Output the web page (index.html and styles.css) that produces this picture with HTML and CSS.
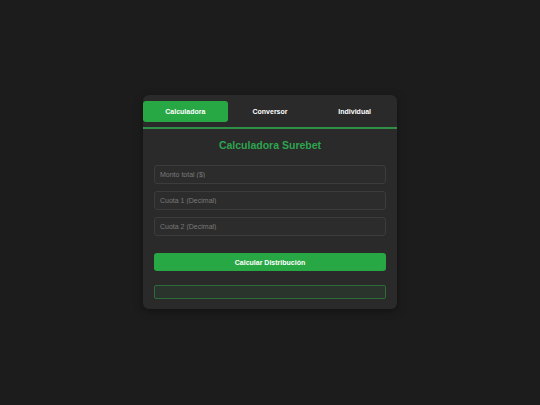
FILE: index.html
```html
<!DOCTYPE html>
<html lang="es">
<head>
<meta charset="utf-8">
<title>Calculadora Surebet</title>
<link rel="stylesheet" href="styles.css">
</head>
<body>
<main class="card">
  <nav class="tabs">
    <button class="tab active">Calculadora</button>
    <button class="tab">Conversor</button>
    <button class="tab">Individual</button>
  </nav>
  <section class="panel">
    <h1 class="title">Calculadora Surebet</h1>
    <input class="field" type="text" placeholder="Monto total ($)">
    <input class="field" type="text" placeholder="Cuota 1 (Decimal)">
    <input class="field" type="text" placeholder="Cuota 2 (Decimal)">
    <button class="calc">Calcular Distribución</button>
    <div class="result"></div>
  </section>
</main>
</body>
</html>
```
FILE: styles.css
```css
* { box-sizing: border-box; }
html, body { height: 100%; }
body {
  margin: 0;
  background: #1c1c1c;
  font-family: "Liberation Sans", Arial, sans-serif;
  display: flex;
  align-items: center;
  justify-content: center;
}
.card {
  width: 254px;
  background: #2a2a2a;
  border-radius: 6px;
  padding-top: 6px;
  box-shadow: 0 2px 8px rgba(0,0,0,0.35);
  margin-bottom: 1px;
}
.tabs {
  display: flex;
  padding-bottom: 5px;
  border-bottom: 2px solid #2f8f46;
}
.tab {
  flex: 1;
  height: 21px;
  border: none;
  background: transparent;
  color: #ffffff;
  font-family: inherit;
  font-size: 7px;
  font-weight: bold;
  border-radius: 3px;
  padding: 0;
}
.tab.active { background: #28a745; color: #fff; }
.panel {
  display: flex;
  flex-direction: column;
  padding: 10px 11px 10px;
}
.title {
  margin: 0 0 14px;
  text-align: center;
  color: #2ea44f;
  font-size: 10.5px;
  line-height: 12px;
  font-weight: bold;
}
.field {
  height: 19px;
  margin-bottom: 7px;
  background: #2c2c2c;
  border: 1px solid #3c3c3c;
  border-radius: 3px;
  padding: 0 5px;
  font-family: inherit;
  font-size: 7px;
  color: #ddd;
}
.field::placeholder { color: #7a7a7a; }
.calc {
  margin-top: 10px;
  height: 18px;
  border: none;
  border-radius: 3px;
  background: #28a745;
  color: #fff;
  font-family: inherit;
  font-size: 7px;
  font-weight: bold;
}
.result {
  margin-top: 14px;
  height: 14px;
  background: #2a332c;
  border: 1px solid #2e6b3a;
  border-radius: 2px;
}
```
